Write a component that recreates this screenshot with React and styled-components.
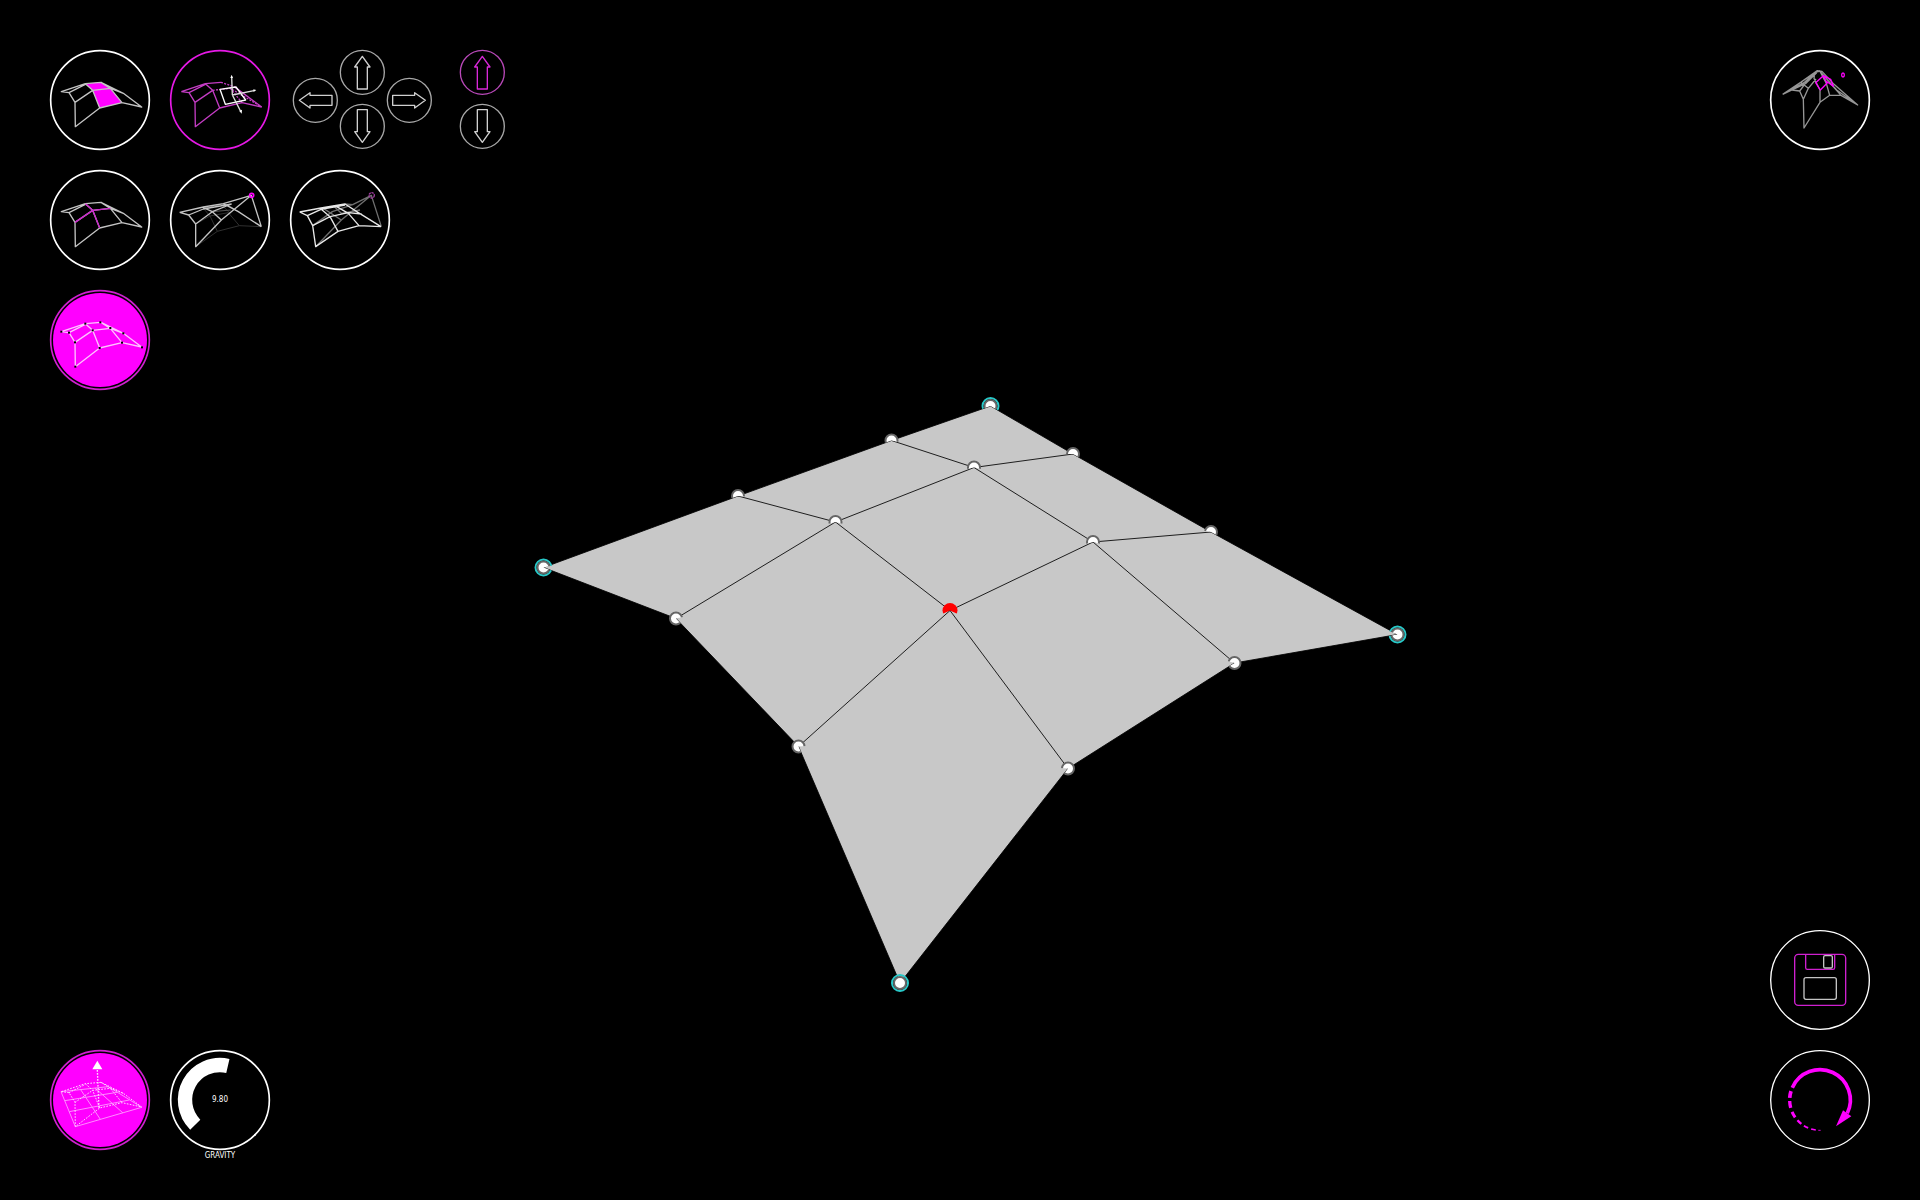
import React, { useState } from 'react';
import styled, { createGlobalStyle, css } from 'styled-components';

const MAGENTA = '#ff00ff';
const SOFT = '#c43cc4';
const LINE = '#c4c4c4';

const GlobalStyle = createGlobalStyle`
  * { box-sizing: border-box; }
  body { margin: 0; background: #000; }
`;

const Workspace = styled.main`
  position: relative;
  min-height: 100vh;
  display: flex;
  flex-direction: column;
  justify-content: space-between;
  background: #000;
  color: #fff;
  font-family: 'DejaVu Sans Condensed', 'DejaVu Sans', sans-serif;
  font-size: 8px;
  line-height: 12px;
`;

const Scene = styled.svg`
  position: absolute;
  inset: 0;
  width: 100%;
  height: 100%;
`;

const Bar = styled.div`
  position: relative;
  display: flex;
  justify-content: space-between;
  align-items: ${(p) => (p.$bottom ? 'flex-end' : 'flex-start')};
  padding: ${(p) => (p.$bottom ? '0 50px 38px' : '50px 50px 0')};
`;

const Stack = styled.div`
  display: flex;
  flex-direction: column;
  gap: 20px;
  padding-bottom: ${(p) => (p.$lifted ? '12px' : '0')};
`;

const Row = styled.div`
  display: flex;
  align-items: flex-start;
  gap: 20px;
`;

const bare = css`
  display: block;
  padding: 0;
  border: 0;
  border-radius: 50%;
  background: none;
  cursor: pointer;
`;

const RoundButton = styled.button`
  ${bare}
  width: 100px;
  height: 100px;
`;

const SmallButton = styled.button`
  ${bare}
  width: 45px;
  height: 45px;
`;

const Drawing = styled.svg`
  display: block;
  width: 100%;
  height: 100%;
  overflow: visible;
  fill: none;
  stroke: ${LINE};
  stroke-width: 4;
  stroke-linejoin: round;
`;

const DirectionPad = styled.div`
  display: flex;
  gap: 2px;
  padding: 0 8px 0 3px;
`;

const PadColumn = styled.div`
  display: flex;
  flex-direction: column;
  gap: 9px;
  padding-top: ${(p) => (p.$side ? '28px' : '0')};
`;

const Dial = styled.label`
  display: block;
  width: 100px;
  text-align: center;
`;

const DialFace = styled.span`
  display: grid;
  height: 100px;
  > * { grid-area: 1 / 1; }
`;

const DialValue = styled.output`
  place-self: center;
`;

const DialInput = styled.input`
  width: 100%;
  height: 100%;
  margin: 0;
  opacity: 0;
  cursor: pointer;
`;

const Caption = styled.span`
  display: block;
`;

function Icon({ ring = '#ffffff', filled, thin, children }) {
  return (
    <Drawing viewBox="30 30 300 300" aria-hidden="true">
      {filled ? (
        <>
          <circle cx="180" cy="180" r="148" stroke="#d020d0" strokeWidth="5" />
          <circle cx="180" cy="180" r="141" fill={MAGENTA} stroke="none" />
        </>
      ) : (
        <circle cx="180" cy="180" r="148" stroke={ring} strokeWidth={thin ? 4 : 5} />
      )}
      {children}
    </Drawing>
  );
}

const MESH =
  'M64 155L87 158L105 187L106 260L179 204L246 188L305 201L250 160L183 127L136 131Z' +
  'M87 158L136 133M105 187L158 151L211 145L250 160M136 131L158 151L179 204M183 127L211 145L246 188';

const DOTS = [
  [64, 155], [87, 158], [105, 187], [106, 260], [136, 131], [158, 151],
  [179, 204], [181, 127], [211, 144], [246, 188], [250, 160], [306, 202],
];

const FaceIcon = () => (
  <Icon>
    <path d="M136 131L183 127L211 145L246 188L179 204L158 151Z" fill={MAGENTA} stroke="none" />
    <path d={MESH} />
  </Icon>
);

const MoveFaceIcon = () => (
  <Icon ring="#e619e6">
    <path
      stroke={SOFT}
      d="M64 155L87 158L105 187L106 260L179 204L246 188L305 201M64 155L136 131L183 127M87 158L136 133M105 187L158 151M136 131L158 151L179 204M222 140L250 160L305 201"
    />
    <path stroke={SOFT} strokeDasharray="6 4" d="M158 151L211 145L305 201M183 127L222 140M211 145L246 188" />
    <path stroke="#fff" d="M180 148L228 141L257 180L196 193Z" />
    <path stroke="#ddd" d="M217 165L215 110M217 165L282 152M217 165L242 214" />
    <path fill="#fff" stroke="none" d="M211 114L215 104L219 114ZM280 148L289 150L281 156ZM238 213L246 209L245 221Z" />
  </Icon>
);

const CrossIcon = () => (
  <Icon>
    <path d={MESH} />
    <path stroke="#cc22cc" d="M136 131L158 151L179 204M105 187L158 151L211 145" />
  </Icon>
);

const PullIcon = () => (
  <Icon>
    <path stroke="#303030" strokeWidth="3" d="M107 260L172 214L238 197L304 200M107 192L150 168L172 214M130 145L150 168L205 158L238 197M184 133L210 160" />
    <path stroke="#555" strokeWidth="3" d="M190 131L212 140L235 155M157 155L212 150M130 145L184 133" />
    <path d="M59 157L86 165L107 192L107 260L184 180L274 106L304 200M59 157L130 141L190 131L274 106M86 165L130 147L215 132M130 143L157 155L184 180M190 131L235 155L304 200M107 192L157 155L215 132" />
    <circle cx="275" cy="106" r="6" stroke={MAGENTA} strokeWidth="5" />
  </Icon>
);

const RelaxIcon = () => (
  <Icon>
    <path stroke="#707070" d="M107 260L184 180L274 106L304 200M98 197L157 155L218 134L274 106M195 132L218 134M130 145L184 180M160 137L184 160L240 150" />
    <path stroke="#e8e8e8" d="M59 156L82 167L98 197L107 260L174 214L237 197L303 200M59 156L123 144L195 132L235 158L303 200M82 167L123 148L195 135M98 197L150 170L205 158L245 162M123 147L150 170L174 214M165 137L205 160L237 197" />
    <circle cx="275" cy="106" r="8" stroke="#a03ca0" strokeDasharray="7 2" />
  </Icon>
);

const NodesIcon = () => (
  <Icon filled>
    <path d={MESH} stroke="#ffc4ff" />
    {DOTS.map(([x, y]) => (
      <rect key={`${x}-${y}`} x={x - 3} y={y - 3} width="6" height="6" fill="#000" stroke="none" />
    ))}
  </Icon>
);

const SubdivideIcon = () => (
  <Icon>
    <path
      stroke="#969696"
      d="M68 163L96 150L119 153L130 178L132 264L180 187L209 166L243 166L293 195L222 133L186 94L172 92L122 127L68 163M68 163L132 128L166 97L180 93M96 150L138 130L170 98M119 153L138 128L172 94M130 178L145 145L168 117M180 187V150L162 115L164 99M209 166L199 130L180 94M243 166L219 139L183 97M122 127L145 145M293 195L230 150L190 106L178 92"
    />
    <path stroke={MAGENTA} d="M190 107L167 128L181 150L201 130ZM190 107L212 118L220 139L195 121" />
    <ellipse cx="249" cy="105" rx="4" ry="6" stroke={MAGENTA} />
  </Icon>
);

const SaveIcon = () => (
  <Icon thin>
    <g stroke="#d020d0">
      <rect x="104" y="103" width="153" height="153" rx="11" />
      <path d="M137 104V143Q137 148 142 148H219Q224 148 224 143V104" />
    </g>
    <rect x="191" y="107" width="26" height="37" rx="4" />
    <rect x="132" y="173" width="97" height="65" rx="6" />
  </Icon>
);

const DASHES = [
  [197, 184, 11], [178, 165, 10], [157, 145, 9], [138, 128, 7],
  [122, 113, 6], [107, 98, 5], [93, 89, 3],
];

const onCircle = (deg, r) => {
  const a = (deg * Math.PI) / 180;
  return `${180 + r * Math.cos(a)} ${180 + r * Math.sin(a)}`;
};

const ResetIcon = () => (
  <Icon thin>
    <g stroke={MAGENTA}>
      <path strokeWidth="11" d={`M${onCircle(204, 91)}A91 91 0 1 1 ${onCircle(26, 91)}`} />
      {DASHES.map(([from, to, width]) => (
        <path key={from} strokeWidth={width} d={`M${onCircle(from, 91)}A91 91 0 0 0 ${onCircle(to, 91)}`} />
      ))}
    </g>
    <path fill={MAGENTA} stroke="none" d="M228 259L249 211L274 229Z" />
  </Icon>
);

const LiftIcon = () => (
  <Icon filled>
    <path stroke="#ff8cff" strokeWidth="3" d="M63 155L106 260L305 202L205 140ZM74 182L232 157M88 215L268 180M122 149L181 238M165 144L249 219" />
    <path d={MESH} stroke="#ffd8ff" strokeWidth="3" strokeDasharray="5 4" />
    <path d="M172 90L177 204" stroke="#ffd8ff" strokeDasharray="5 4" />
    <path d="M172 62L157 88H187Z" fill="#fff" stroke="none" />
  </Icon>
);

const TURN = { up: 0, right: 90, down: 180, left: 270 };

function Arrow({ direction, label, active }) {
  return (
    <SmallButton type="button" aria-label={label}>
      <Drawing viewBox="-67 -67 135 135" aria-hidden="true">
        <circle r="66" stroke={active ? '#b848b8' : '#a8a8a8'} />
        <path
          transform={`rotate(${TURN[direction]})`}
          stroke={active ? '#d828d8' : '#d0d0d0'}
          d="M0 -48L23 -16H15V50H-15V-16H-23Z"
        />
      </Drawing>
    </SmallButton>
  );
}

const POINTS = {
  a: [543.5, 567.5], b: [738, 496], c: [891.5, 440.5], d: [990.5, 406],
  e: [676, 618.5], f: [835.5, 522], g: [974, 467.5], h: [1073, 454],
  n: [798.5, 746.5], i: [950, 610.5], j: [1093, 542], k: [1211, 532],
  p: [900, 983], o: [1068, 768.5], m: [1234.5, 663], l: [1397.5, 634.5],
};

/* Angles, clockwise from the x axis, between which the surface hides the node. */
const NODES = [
  ['a', -12, 21, 'pinned'], ['b', 3, 160], ['c', 12, 160], ['d', 30, 161, 'pinned'],
  ['e', -12, 46], ['f', 15, 165], ['g', 12, 168], ['h', 29, 180],
  ['n', -4, 66], ['i', 24, 156, 'selected'], ['j', 15, 165], ['k', 29, 190],
  ['p', 0, 0, 'pinned'], ['o', 128, 184], ['m', 148, 196], ['l', 170, 202, 'pinned'],
];

const trace = (names) => names.split('').map((name) => POINTS[name].join(' ')).join('L');

function Node({ name, from, to, kind }) {
  const [x, y] = POINTS[name];
  const edge = (deg) => {
    const a = (deg * Math.PI) / 180;
    return `${x + 12 * Math.cos(a)} ${y + 12 * Math.sin(a)}`;
  };
  const whole = from === to;
  const large = 360 - (to - from) > 180 ? 1 : 0;
  return (
    <g clipPath={whole ? undefined : `url(#visible-${name})`}>
      {!whole && (
        <clipPath id={`visible-${name}`}>
          <path d={`M${x} ${y}L${edge(to)}A12 12 0 ${large} 1 ${edge(from)}Z`} />
        </clipPath>
      )}
      {kind === 'pinned' && <circle cx={x} cy={y} r="8" fill="none" stroke="#28c8c8" strokeWidth="2" />}
      {kind === 'selected' ? (
        <circle cx={x} cy={y} r="7.5" fill="#ff0000" />
      ) : (
        <circle cx={x} cy={y} r="6" fill="#fff" stroke="#666" strokeWidth="2" />
      )}
    </g>
  );
}

function Surface() {
  return (
    <Scene viewBox="0 0 1920 1200" role="img" aria-label="Surface model">
      <path fill="#c8c8c8" d={`M${trace('abcdhklmopne')}Z`} />
      <path
        fill="none"
        stroke="#000"
        strokeOpacity=".85"
        d={`M${trace('abcdhklmopne')}ZM${trace('efgh')}M${trace('nijk')}M${trace('bfio')}M${trace('cgjm')}`}
      />
      {NODES.map(([name, from, to, kind]) => (
        <Node key={name} name={name} from={from} to={to} kind={kind} />
      ))}
    </Scene>
  );
}

function GravityDial() {
  const [gravity, setGravity] = useState(9.8);
  return (
    <Dial>
      <DialFace>
        <Icon>
          <path stroke="#fff" strokeWidth="43" d={`M${onCircle(135, 105)}A105 105 0 0 1 ${onCircle(283, 105)}`} />
          <circle cx="285" cy="284" r="3" fill="#fff" stroke="none" />
        </Icon>
        <DialValue>{gravity.toFixed(2)}</DialValue>
        <DialInput
          type="range"
          min="0"
          max="20"
          step="0.1"
          value={gravity}
          onChange={(event) => setGravity(Number(event.target.value))}
        />
      </DialFace>
      <Caption>GRAVITY</Caption>
    </Dial>
  );
}

function Tool({ label, children }) {
  return <RoundButton type="button" aria-label={label}>{children}</RoundButton>;
}

export default function App() {
  return (
    <Workspace>
      <GlobalStyle />
      <Surface />
      <Bar>
        <Stack>
          <Row>
            <Tool label="Select face"><FaceIcon /></Tool>
            <Tool label="Move face"><MoveFaceIcon /></Tool>
            <DirectionPad>
              <PadColumn $side><Arrow direction="left" label="Move left" /></PadColumn>
              <PadColumn>
                <Arrow direction="up" label="Move back" />
                <Arrow direction="down" label="Move forward" />
              </PadColumn>
              <PadColumn $side><Arrow direction="right" label="Move right" /></PadColumn>
            </DirectionPad>
            <PadColumn>
              <Arrow direction="up" label="Raise" active />
              <Arrow direction="down" label="Lower" />
            </PadColumn>
          </Row>
          <Row>
            <Tool label="Select edges"><CrossIcon /></Tool>
            <Tool label="Pull corner"><PullIcon /></Tool>
            <Tool label="Relax surface"><RelaxIcon /></Tool>
          </Row>
          <Row>
            <Tool label="Show nodes"><NodesIcon /></Tool>
          </Row>
        </Stack>
        <Tool label="Subdivide"><SubdivideIcon /></Tool>
      </Bar>
      <Bar $bottom>
        <Row>
          <Tool label="Lift"><LiftIcon /></Tool>
          <GravityDial />
        </Row>
        <Stack $lifted>
          <Tool label="Save"><SaveIcon /></Tool>
          <Tool label="Reset"><ResetIcon /></Tool>
        </Stack>
      </Bar>
    </Workspace>
  );
}
